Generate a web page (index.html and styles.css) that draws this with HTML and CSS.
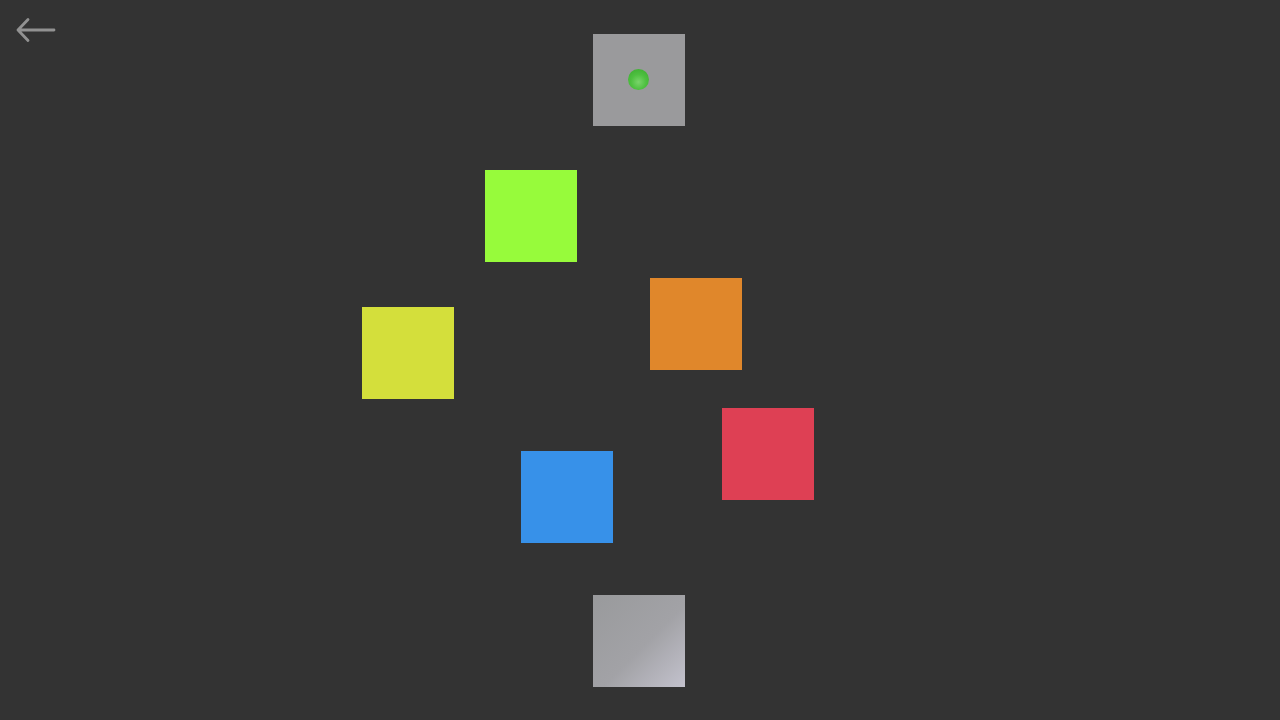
FILE: index.html
```html
<!DOCTYPE html>
<html lang="en">
<head>
    <meta charset="UTF-8">
    <title>Colors</title>
    <link rel="stylesheet" href="styles.css">
</head>
<body>
    <div class="screen">
        <a class="back" href="#">
            <svg width="44" height="34" viewBox="0 0 44 34">
                <path d="M41 14 L5 14 M15 3.5 L5 14 L15 24.5" fill="none" stroke="#929292" stroke-width="2.8" stroke-linecap="round" stroke-linejoin="round"/>
            </svg>
        </a>
        <div class="board">
            <div class="ring ring-1"></div>
            <div class="ring ring-2"></div>
            <div class="ring ring-3"></div>
            <div class="tile start"><span class="ball"></span></div>
            <div class="tile green"></div>
            <div class="tile yellow"></div>
            <div class="tile orange"></div>
            <div class="tile red"></div>
            <div class="tile blue"></div>
            <div class="tile goal"></div>
        </div>
    </div>
</body>
</html>
```

FILE: styles.css
```css
html, body {
    margin: 0;
    height: 100%;
    background-color: #333333;
    overflow: hidden;
}
.screen {
    position: relative;
    width: 1280px;
    height: 720px;
    background-color: #333333;
    overflow: hidden;
}
.back {
    position: absolute;
    left: 13px;
    top: 16px;
    display: block;
    width: 44px;
    height: 34px;
    z-index: 2;
}
.back svg {
    display: block;
}
.board {
    position: absolute;
    left: 0;
    top: 0;
    width: 1280px;
    height: 720px;
    overflow: hidden;
}
.ring {
    position: absolute;
    border-radius: 50%;
    box-shadow: 0 0 6px rgba(255,255,255,0.006);
    background-color: rgba(255,255,255,0.005);
}
.ring-1 {
    left: 150px;
    top: -130px;
    width: 980px;
    height: 980px;
}
.ring-2 {
    left: 360px;
    top: 80px;
    width: 560px;
    height: 560px;
}
.ring-3 {
    left: 460px;
    top: 180px;
    width: 360px;
    height: 360px;
}
.tile {
    position: absolute;
    width: 92px;
    height: 92px;
}
.start {
    left: 593px;
    top: 34px;
    background-color: #9a9a9c;
}
.ball {
    position: absolute;
    left: 35px;
    top: 35px;
    width: 21px;
    height: 21px;
    border-radius: 50%;
    background: radial-gradient(circle at 50% 62%, #7ad46b 0, #4ec040 45%, #3aa92e 100%);
}
.green {
    left: 485px;
    top: 170px;
    background-color: #97fb3b;
}
.yellow {
    left: 362px;
    top: 307px;
    background-color: #d4df3b;
}
.orange {
    left: 650px;
    top: 278px;
    background-color: #e0872b;
}
.red {
    left: 722px;
    top: 408px;
    background-color: #de4054;
}
.blue {
    left: 521px;
    top: 451px;
    background-color: #3791e9;
}
.goal {
    left: 593px;
    top: 595px;
    background: linear-gradient(135deg, #999a9c 0%, #a2a2a6 55%, #c3c2cd 100%);
}
```
